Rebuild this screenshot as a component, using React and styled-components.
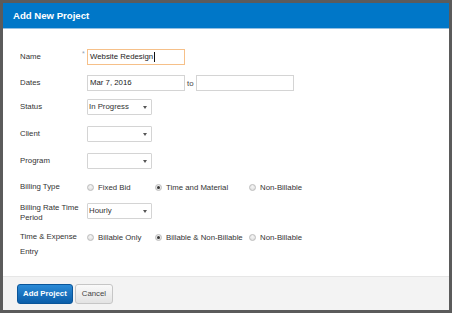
import styled, { createGlobalStyle } from 'styled-components';

const GlobalStyle = createGlobalStyle`
	html, body {
		margin: 0;
		padding: 0;
		background: #5b5b5b;
	}
	* {
		box-sizing: border-box;
	}
`;

const Frame = styled.div`
	width: 452px;
	height: 313px;
	border: 3px solid #5b5b5b;
	background: #fff;
	display: flex;
	flex-direction: column;
	font-family: 'Liberation Sans', Arial, sans-serif;
	color: #333;
`;

const Header = styled.div`
	height: 26px;
	flex: none;
	background: #0077c8;
	border-bottom: 1px solid #93bfe2;
	display: flex;
	align-items: center;
	padding-left: 10px;
	color: #fff;
	font-weight: 700;
	font-size: 9.6px;
`;

const Body = styled.div`
	flex: 1;
	padding: 20px 0 0 17px;
	display: flex;
	flex-direction: column;
`;

const Row = styled.div`
	display: flex;
	align-items: flex-start;
	margin-top: ${(props) => props.$top || 0}px;
`;

const Label = styled.div`
	width: 67px;
	flex: none;
	font-size: 7.8px;
	line-height: ${(props) => props.$lh || 16}px;
	color: #333;
`;

const Field = styled.div`
	position: relative;
	display: flex;
	align-items: center;
`;

const Required = styled.span`
	position: absolute;
	left: -5px;
	top: 1px;
	font-size: 7px;
	color: #8fa3b8;
`;

const TextBox = styled.div`
	width: ${(props) => props.$width || 98}px;
	height: 16px;
	border: 1px solid ${(props) => (props.$focus ? '#f6c089' : '#d4d4d4')};
	background: #fff;
	padding-left: 2px;
	font-size: 7.8px;
	line-height: 14px;
	color: #222;
	display: flex;
	align-items: center;
`;

const Caret = styled.span`
	display: inline-block;
	width: 1px;
	height: 10px;
	background: #111;
	margin-left: 1px;
`;

const To = styled.span`
	font-size: 7.8px;
	color: #444;
	margin: 0 2px;
`;

const Select = styled.div`
	position: relative;
	width: 65px;
	height: 16px;
	border: 1px solid #d4d4d4;
	border-radius: 1px;
	background: #fff;
	padding-left: 1px;
	font-size: 7.8px;
	line-height: 14px;
	color: #333;
	&::after {
		content: '';
		position: absolute;
		right: 4px;
		top: 6px;
		border-left: 2.5px solid transparent;
		border-right: 2.5px solid transparent;
		border-top: 3px solid #555;
	}
`;

const RadioGroup = styled.div`
	display: grid;
	grid-template-columns: 68px 94px auto;
	height: 16px;
	align-items: center;
`;

const Option = styled.label`
	display: flex;
	align-items: center;
	gap: 4px;
	font-size: 7.8px;
	color: #333;
	white-space: nowrap;
`;

const Radio = styled.span`
	width: 7px;
	height: 7px;
	border-radius: 50%;
	border: 1px solid #bcbcbc;
	background: radial-gradient(circle at 50% 35%, #f6f6f6, #d9d9d9);
	display: flex;
	align-items: center;
	justify-content: center;
	&::after {
		content: '';
		width: 3px;
		height: 3px;
		border-radius: 50%;
		background: ${(props) => (props.$checked ? '#3a3a3a' : 'transparent')};
	}
`;

const Footer = styled.div`
	height: 34px;
	flex: none;
	background: #f3f3f3;
	border-top: 1px solid #e6e6e6;
	display: flex;
	align-items: center;
	gap: 2px;
	padding-left: 14px;
`;

const Button = styled.button`
	height: 20px;
	padding: 0 ${(props) => (props.$primary ? 5 : 6)}px;
	border-radius: 3px;
	font-family: inherit;
	font-size: 7.8px;
	font-weight: ${(props) => (props.$primary ? 700 : 400)};
	color: ${(props) => (props.$primary ? '#fff' : '#444')};
	border: 1px solid ${(props) => (props.$primary ? '#0a5599' : '#c6c6c6')};
	background: ${(props) =>
		props.$primary
			? 'linear-gradient(#2b8ad6, #0b5ea9)'
			: 'linear-gradient(#fafafa, #e3e3e3)'};
`;

const RadioRow = ({ options, checked }) => (
	<RadioGroup>
		{options.map((o) => (
			<Option key={o}>
				<Radio $checked={o === checked} />
				{o}
			</Option>
		))}
	</RadioGroup>
);

const App = () => {
	return (
		<>
			<GlobalStyle />
			<Frame>
				<Header>Add New Project</Header>
				<Body>
					<Row>
						<Label>Name</Label>
						<Field>
							<Required>*</Required>
							<TextBox $focus>
								Website Redesign
								<Caret />
							</TextBox>
						</Field>
					</Row>
					<Row $top={10}>
						<Label>Dates</Label>
						<Field>
							<TextBox>Mar 7, 2016</TextBox>
							<To>to</To>
							<TextBox />
						</Field>
					</Row>
					<Row $top={8}>
						<Label>Status</Label>
						<Select>In Progress</Select>
					</Row>
					<Row $top={11}>
						<Label>Client</Label>
						<Select />
					</Row>
					<Row $top={11}>
						<Label>Program</Label>
						<Select />
					</Row>
					<Row $top={10}>
						<Label>Billing Type</Label>
						<RadioRow
							options={['Fixed Bid', 'Time and Material', 'Non-Billable']}
							checked="Time and Material"
						/>
					</Row>
					<Row $top={8}>
						<Label $lh={9.5}>Billing Rate Time Period</Label>
						<Select>Hourly</Select>
					</Row>
					<Row $top={7}>
						<Label $lh={15}>Time &amp; Expense Entry</Label>
						<RadioRow
							options={['Billable Only', 'Billable & Non-Billable', 'Non-Billable']}
							checked="Billable & Non-Billable"
						/>
					</Row>
				</Body>
				<Footer>
					<Button $primary>Add Project</Button>
					<Button>Cancel</Button>
				</Footer>
			</Frame>
		</>
	);
};

export default App;
